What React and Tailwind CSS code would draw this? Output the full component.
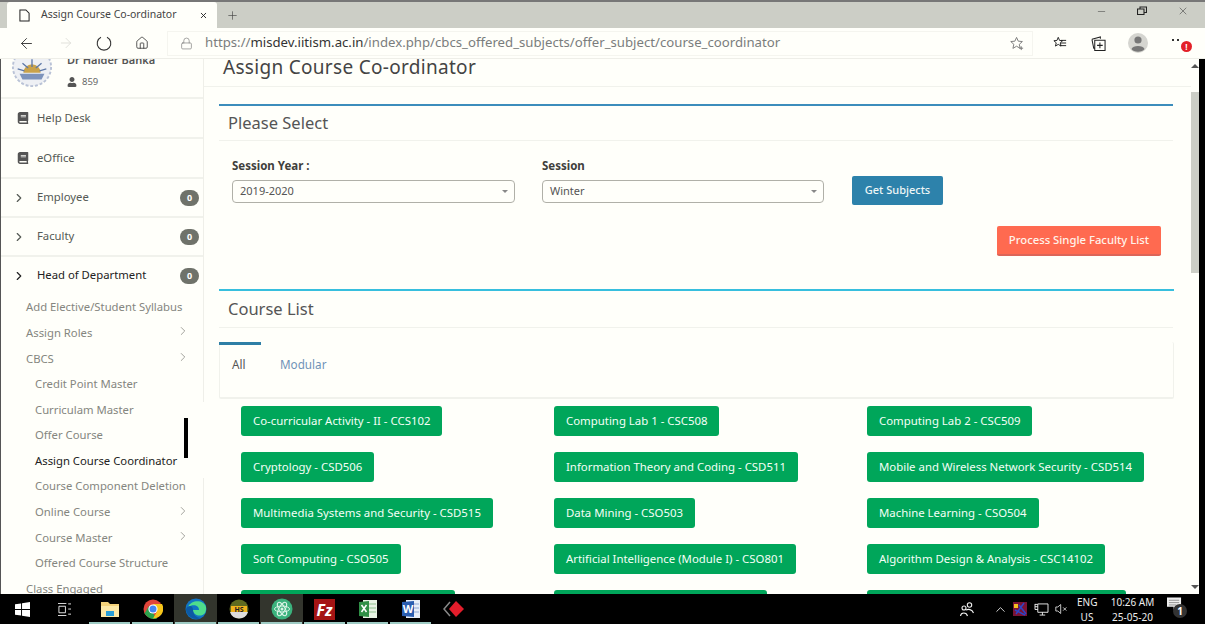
import React from "react";
import { ArrowLeft, ArrowRight, Home, Lock, Plus, X, Minus, ChevronRight, ChevronUp } from "lucide-react";
import { FaBook, FaUser } from "react-icons/fa";

const font = "font-['Noto_Sans','Open_Sans',sans-serif]";

const courses = [
  ["Co-curricular Activity - II - CCS102", "Computing Lab 1 - CSC508", "Computing Lab 2 - CSC509"],
  ["Cryptology - CSD506", "Information Theory and Coding - CSD511", "Mobile and Wireless Network Security - CSD514"],
  ["Multimedia Systems and Security - CSD515", "Data Mining - CSO503", "Machine Learning - CSO504"],
  ["Soft Computing - CSO505", "Artificial Intelligence (Module I) - CSO801", "Algorithm Design & Analysis - CSC14102"],
];

function Course({ children }) {
  return (
    <div className="flex">
      <div className="h-[30px] px-3 flex items-center rounded-[3px] bg-[#00a65a] text-[#f4fff6] text-[11.4px] whitespace-nowrap">
        {children}
      </div>
    </div>
  );
}

function TopRow({ label }) {
  return (
    <div className="h-[40px] shrink-0 flex items-center pl-[16px] border-b-2 border-[#f1f2ec] text-[#555a55] text-[11.3px]">
      <FaBook className="w-[12px] h-[12px] text-[#555] mr-[8px]" />
      {label}
    </div>
  );
}

function GroupRow({ label, active }) {
  return (
    <div className={`shrink-0 flex items-center pl-[11px] pr-[5px] text-[11.3px] ${active ? "h-[38px] pb-[1px] text-[#222]" : "h-[39px] text-[#555a55] border-b-2 border-[#f1f2ec]"}`}>
      <ChevronRight className="w-[14px] h-[14px] mr-[11px]" strokeWidth={2} />
      <span className="flex-1">{label}</span>
      <span className="w-[19px] h-[16px] rounded-full bg-[#6f726a] text-white text-[9px] font-bold flex items-center justify-center">0</span>
    </div>
  );
}

function Sub({ label, arrow, deep, active }) {
  return (
    <div className={`h-[25.6px] shrink-0 flex items-center text-[11.3px] whitespace-nowrap ${deep ? "pl-[34px]" : "pl-[25px]"} pr-[14px] ${active ? "text-[#222]" : "text-[#85867f]"}`}>
      <span className="flex-1">{label}</span>
      {arrow && <ChevronRight className="w-[14px] h-[14px] -mt-[4px]" strokeWidth={1.3} />}
    </div>
  );
}

function Sidebar() {
  return (
    <aside className="relative w-[204px] shrink-0 h-full overflow-hidden border-l border-l-[#555]">
      <div className="h-[40px] shrink-0 relative flex border-b-2 border-[#f1f2ec]">
        <svg viewBox="0 0 44 44" className="w-[42px] h-[42px] absolute left-[10px] -top-[13px]">
          <circle cx="22" cy="22" r="20" fill="#eef0f4" stroke="#b9c2d6" strokeWidth="2" strokeDasharray="3 2" />
          <path d="M13 28a9 9 0 0 1 18 0z" fill="#c9a24a" />
          <path d="M22 14v8M12 18l6 5M32 18l-6 5M7 24l7 2M37 24l-7 2" stroke="#5d78a8" strokeWidth="1.4" />
          <path d="M9 29h26l-3 6H12z" fill="#7d93bb" />
        </svg>
        <div className="pl-[66px]">
          <div className="-mt-[8px] h-[17px] text-[11px] font-semibold text-[#555] leading-[17px]">Dr Haider Banka</div>
          <div className="mt-[7px] flex items-center text-[9.5px] text-[#666]">
            <FaUser className="w-[10px] h-[10px] text-[#555] mr-[5px]" />859
          </div>
        </div>
      </div>
      <TopRow label="Help Desk" />
      <TopRow label="eOffice" />
      <GroupRow label="Employee" />
      <GroupRow label="Faculty" />
      <GroupRow label="Head of Department" active />
      <Sub label="Add Elective/Student Syllabus" />
      <Sub label="Assign Roles" arrow />
      <Sub label="CBCS" arrow />
      <Sub label="Credit Point Master" deep />
      <Sub label="Curriculam Master" deep />
      <Sub label="Offer Course" deep />
      <Sub label="Assign Course Coordinator" deep active />
      <Sub label="Course Component Deletion" deep />
      <Sub label="Online Course" deep arrow />
      <Sub label="Course Master" deep arrow />
      <Sub label="Offered Course Structure" deep />
      <Sub label="Class Engaged" />
      <div className="absolute left-[183px] top-[359px] w-[4px] h-[40px] bg-black" />
      <div className="absolute right-0 top-0 h-[343px] w-px bg-[#efefe9]" />
      <div className="absolute right-0 top-[419px] bottom-0 w-px bg-[#efefe9]" />
    </aside>
  );
}

function Select({ label, value, w, ml }) {
  return (
    <div className={`${w} ${ml}`}>
      <div className="h-[17px] text-[11.5px] font-bold text-[#3f403c] leading-[17px]">{label}</div>
      <div className="mt-[6px] h-[23px] rounded-[4px] border border-[#b0b0a8] flex items-center pl-[7px] pr-[6px] text-[11px] text-[#555]">
        <span className="flex-1">{value}</span>
        <span className="w-0 h-0 border-l-[3px] border-r-[3px] border-t-[3px] border-l-transparent border-r-transparent border-t-[#888]" />
      </div>
    </div>
  );
}

function Main() {
  return (
    <main className="flex-1 min-w-0 h-full overflow-hidden">
      <div className="h-[28px] pl-[19px] border-b border-[#f1f2ec] text-[19px] text-[#444] leading-[17px] tracking-[0.3px] whitespace-nowrap">
        Assign Course Co-ordinator
      </div>
      <section className="mt-[17px] ml-[15px] w-[954px] border-t-2 border-[#3c8dbc]">
        <div className="h-[35px] pl-[9px] flex items-center border-b border-[#f1f2ec] text-[16.5px] text-[#555]">Please Select</div>
        <div className="pl-[13px] pt-[16px] flex items-start">
          <Select label="Session Year :" value="2019-2020" w="w-[283px]" />
          <Select label="Session" value="Winter" w="w-[282px]" ml="ml-[27px]" />
          <button className="ml-[28px] mt-[19px] w-[91px] h-[29px] rounded-[2px] bg-[#2d82ab] text-[#eef6f6] text-[11px] font-medium">Get Subjects</button>
        </div>
        <div className="mt-[21px] flex justify-end pr-[12px]">
          <button className="w-[164px] h-[30px] rounded-[2px] bg-[#ff6a50] border-b-2 border-[#dc6558] text-[#fff3ea] text-[11.3px] font-medium">Process Single Faculty List</button>
        </div>
      </section>
      <section className="mt-[33px] ml-[15px] w-[955px] border-t-2 border-[#37bfde]">
        <div className="h-[37px] pl-[9px] flex items-center border-b border-[#f1f2ec] text-[16.5px] text-[#555] mr-[1px]">Course List</div>
        <div className="mt-[14px] h-[57px] rounded-[2px] border-l border-r border-b-2 border-[#f1f2ec] relative flex text-[11.7px]">
          <div className="w-[42px] h-[40px] border-t-[3px] border-[#2f7fa6] -ml-px pl-[13px] pt-[11px] text-[#555]">All</div>
          <div className="ml-[19px] pt-[14px] text-[#6f93b8]">Modular</div>
        </div>
        <div className="mt-[7px] pl-[22px] grid grid-cols-[313px_313px_1fr] gap-y-[16px]">
          {courses.map((row) => row.map((c) => <Course key={c}>{c}</Course>))}
          <div className="w-[214px] h-[30px] rounded-[3px] bg-[#00a65a]" />
          <div className="w-[213px] h-[30px] rounded-[3px] bg-[#00a65a]" />
          <div className="w-[259px] h-[30px] rounded-[3px] bg-[#00a65a]" />
        </div>
      </section>
    </main>
  );
}

function Scrollbar() {
  return (
    <div className="w-[8px] shrink-0 h-full flex flex-col items-center relative">
      <div className="mt-[5px] w-0 h-0 border-l-[4px] border-r-[4px] border-b-[4px] border-l-transparent border-r-transparent border-b-[#555]" />
      <div className="mt-[24px] w-full h-[181px] bg-[#cccec6]" />
      <div className="mt-auto mb-[5px] w-0 h-0 border-l-[4px] border-r-[4px] border-t-[4px] border-l-transparent border-r-transparent border-t-[#555]" />
    </div>
  );
}

function Browser() {
  return (
    <div>
      <div className="h-[2px] bg-[#777]" />
      <div className="h-[26px] bg-[#cccec6] flex items-stretch pr-[16px]">
        <div className="ml-[7px] w-[210px] bg-[#fffffa] rounded-t-[3px] flex items-center text-[10.5px] text-[#444]">
          <svg viewBox="0 0 12 14" className="w-[11px] h-[13px] ml-[12px] mr-[11px]" fill="none" stroke="#222" strokeWidth="1.1">
            <path d="M1 1h6.5L11 4.5V13H1z" />
          </svg>
          <span className="flex-1 whitespace-nowrap">Assign Course Co-ordinator</span>
          <X className="w-[9px] h-[9px] mr-[9px] text-[#222]" strokeWidth={2.4} />
        </div>
        <div className="ml-[9px] flex items-center"><Plus className="w-[13px] h-[13px] text-[#444]" strokeWidth={1.2} /></div>
        <div className="ml-auto flex items-center gap-[30px] pb-[8px] text-[#444]">
          <Minus className="w-[11px] h-[11px]" strokeWidth={1.2} />
          <svg viewBox="0 0 10 10" className="w-[10px] h-[10px]" fill="none" stroke="#222" strokeWidth="1.1"><path d="M.5 3h6.5v5.500H.5zM3 3V1h6.500v5.500H7" /></svg>
          <X className="w-[12px] h-[12px]" strokeWidth={1.2} />
        </div>
      </div>
      <div className="h-[31px] bg-[#fffffa] flex items-center border-b border-[#eeeee8] relative">
        <ArrowLeft className="ml-[18px] w-[17px] h-[17px] text-[#333]" strokeWidth={1.3} />
        <ArrowRight className="ml-[23px] w-[16px] h-[16px] text-[#dcdcd6]" strokeWidth={1.3} />
        <svg viewBox="0 0 16 16" className="ml-[22px] w-[16px] h-[16px]" fill="none" stroke="#333" strokeWidth="1.1"><path d="M5 2.2A6.8 6.8 0 1 0 11 2.2" /></svg>
        <Home className="ml-[23px] w-[14px] h-[14px] text-[#333]" strokeWidth={1.4} />
        <div className="ml-[18px] w-[866px] h-[25px] border border-[#f5f5ef] flex items-center text-[13.2px] whitespace-nowrap text-[#7a7d7d]">
          <Lock className="ml-[12px] mr-[12px] w-[13px] h-[13px] text-[#777]" strokeWidth={1.2} />
          <span>https://</span><span className="text-[#333]">misdev.iitism.ac.in</span><span>/index.php/cbcs_offered_subjects/offer_subject/course_coordinator</span>
          <svg viewBox="0 0 16 16" className="ml-auto mr-[7px] w-[15px] h-[15px]" fill="none" stroke="#777" strokeWidth="1"><path d="M7 1.500l1.800 4 4.400.4-3.300 3 1 4.300L7 10.900l-3.900 2.300 1-4.300-3.300-3 4.400-.4zM12 11v4M10 13h4" /></svg>
        </div>
        <svg viewBox="0 0 16 16" className="ml-[20px] w-[14px] h-[14px]" fill="none" stroke="#222" strokeWidth="1.1"><path d="M6 1.500l1.500 3.600 3.500.3-2.700 2.400.9 3.700L6 9.600l-3.200 1.900.9-3.700L1 5.400l3.500-.3zM9 5h6M9 8h6M8 11h7" /></svg>
        <svg viewBox="0 0 16 16" className="ml-[24px] w-[15px] h-[15px]" fill="none" stroke="#222" strokeWidth="1.1"><path d="M1 3.500L10 1v2M4 4.500h11v11H4zM1 3.500l2 10M9.500 7v6M6.500 10h6" /></svg>
        <svg viewBox="0 0 20 20" className="ml-[22px] w-[20px] h-[20px]"><circle cx="10" cy="10" r="10" fill="#d5d5d0" /><circle cx="10" cy="7" r="3.600" fill="#777" /><path d="M3.500 16c1-4 12-4 13 0-2 3.500-11 3.500-13 0z" fill="#777" /></svg>
        <div className="ml-[24px] relative w-[16px] h-[16px] text-[#333]">
          <div className="absolute left-0 top-[4px] flex gap-[3px]"><span className="w-[2px] h-[2px] bg-[#333]" /><span className="w-[2px] h-[2px] bg-[#333]" /></div>
          <div className="absolute left-[9px] top-[6px] w-[11px] h-[11px] rounded-full bg-[#e32028] text-white text-[8px] font-bold leading-[11px] text-center">!</div>
        </div>
      </div>
    </div>
  );
}

const Under = ({ children, active }) => (
  <div className={`relative h-full w-[43px] flex items-center justify-center ${active ? "bg-[#33352d]" : ""}`}>
    {children}
    {active !== undefined && <div className="absolute left-[1px] right-[1px] bottom-0 h-[2px] bg-[#9ecbc4]" />}
  </div>
);

function Taskbar() {
  return (
    <footer className="h-[30px] bg-black flex items-stretch text-[#eee] text-[10px]">
      <div className="w-[45px] flex items-center justify-center">
        <svg viewBox="0 0 16 16" className="w-[15px] h-[15px]" fill="#fff"><path d="M0 2.500l6.500-1v6H0zM7.500 1.300L16 0v7.500H7.500zM0 8.500h6.500v6l-6.500-1zM7.500 8.500H16V16l-8.500-1.300z" /></svg>
      </div>
      <div className="w-[38px] flex items-center justify-center">
        <svg viewBox="0 0 16 14" className="w-[15px] h-[13px]" fill="none" stroke="#eee" strokeWidth="1"><path d="M1 .5h9M1 13.500h9M2 3.500h7v7H2zM12 1h3M12 6.500h3M12 12h3" /></svg>
      </div>
      <div className="flex ml-[5px]">
        <Under active={false}>
          <svg viewBox="0 0 20 18" className="w-[20px] h-[18px]"><path d="M1 2h7l2 2h9v13H1z" fill="#f4d27a" /><path d="M1 6h18v11H1z" fill="#fde9a8" /><path d="M6 11h8v5H6z" fill="#2b9fd8" /></svg>
        </Under>
        <Under active={false}>
          <svg viewBox="0 0 20 20" className="w-[20px] h-[20px]"><circle cx="10" cy="10" r="9.500" fill="#e0443a" /><path d="M1.500 14.500L6 7l4 7 4 6c-6 1-10-2-12.500-5.500z" fill="#2ba24c" /><path d="M10 5h9a9.500 9.500 0 0 1-6 14l-3 .5 4-7z" fill="#f6c51b" /><circle cx="10" cy="10" r="4.600" fill="#fff" /><circle cx="10" cy="10" r="3.500" fill="#4285f4" /></svg>
        </Under>
        <Under active={true}>
          <svg viewBox="0 0 22 22" className="w-[22px] h-[22px]"><circle cx="11" cy="11" r="10.500" fill="#1173c4" /><path d="M21 9C19 2 7 1 3 9c5-3 11-2 11 3h-6c0 5 8 8 12 3 .8-1.500 1.200-3.500 1-6z" fill="#4fdc8c" /><path d="M8 12c0 5 4 8 8 8-7 3-15-2-15-9 2-4 7-4 7 1z" fill="#0c59a4" /></svg>
        </Under>
        <Under active={false}>
          <svg viewBox="0 0 20 20" className="w-[20px] h-[20px]"><circle cx="10" cy="10" r="9.500" fill="#5f6b20" /><path d="M1 13a9.500 9.500 0 0 0 18 0z" fill="#ddd" /><path d="M2 7h16v6H2z" fill="#f1b31c" /><text x="10" y="12.500" fontSize="7" fontWeight="700" textAnchor="middle" fill="#222">HS</text></svg>
        </Under>
        <Under active={true}>
          <svg viewBox="0 0 22 22" className="w-[22px] h-[22px]" fill="none"><circle cx="11" cy="11" r="10.500" fill="#3bb27d" /><g stroke="#d9f3e6" strokeWidth="1"><ellipse cx="11" cy="11" rx="7.500" ry="3" /><ellipse cx="11" cy="11" rx="7.500" ry="3" transform="rotate(60 11 11)" /><ellipse cx="11" cy="11" rx="7.500" ry="3" transform="rotate(120 11 11)" /></g><circle cx="11" cy="11" r="1.500" fill="#d9f3e6" /></svg>
        </Under>
        <Under active={false}>
          <svg viewBox="0 0 20 20" className="w-[21px] h-[21px]"><rect width="20" height="20" fill="#a51414" /><text x="10" y="16" fontSize="15" fontWeight="700" fontStyle="italic" textAnchor="middle" fill="#fff">Fz</text></svg>
        </Under>
        <Under active={false}>
          <svg viewBox="0 0 20 20" className="w-[20px] h-[20px]"><path d="M5 1h14v18H5z" fill="#e8f3e4" /><path d="M11 5h7M11 9h7M11 13h7" stroke="#8fbf8f" /><path d="M1 3l10-1v16L1 17z" fill="#2f8f46" /><path d="M3.500 6l5 7M8.500 6l-5 7" stroke="#fff" strokeWidth="1.500" /></svg>
        </Under>
        <Under active={false}>
          <svg viewBox="0 0 20 20" className="w-[20px] h-[20px]"><path d="M5 1h14v18H5z" fill="#e6edf8" /><path d="M12 5h6M12 9h6M12 13h6" stroke="#8ea9d8" /><path d="M1 3l12-1v16L1 17z" fill="#2a5db0" /><text x="7" y="14" fontSize="11" fontWeight="700" textAnchor="middle" fill="#fff">W</text></svg>
        </Under>
        <div className="w-[43px] flex items-center justify-center">
          <svg viewBox="0 0 22 18" className="w-[22px] h-[18px]"><path d="M7 2L1 9l6 7" fill="none" stroke="#888" strokeWidth="1.500" /><path d="M13 1l8 8-8 8-7-8z" fill="#e31d2b" /></svg>
        </div>
      </div>
      <div className="ml-auto flex items-center">
        <svg viewBox="0 0 16 16" className="w-[16px] h-[16px]" fill="none" stroke="#eee" strokeWidth="1.100"><circle cx="5" cy="7" r="2" /><circle cx="10.500" cy="4" r="2.200" /><path d="M1.500 15c.5-4 6-4 7 0M7 9c2-1 6-1 7.500 3" /></svg>
        <ChevronUp className="ml-[18px] w-[15px] h-[15px]" strokeWidth={1.4} />
        <svg viewBox="0 0 14 14" className="ml-[5px] w-[14px] h-[14px]"><rect width="14" height="14" fill="#7a1335" /><path d="M1 2h4v4H1z" fill="#f3c020" /><path d="M6 3l7 9M11 1L3 12M2 8l10 5" stroke="#2d46c8" strokeWidth="1.500" /></svg>
        <svg viewBox="0 0 16 14" className="ml-[7px] w-[15px] h-[13px]" fill="none" stroke="#eee" strokeWidth="1"><path d="M4 1h11v9H4zM9 10v3M6 13h6M1 1.500h3M1 4h3M1 1v6h3" /></svg>
        <svg viewBox="0 0 16 14" className="ml-[6px] w-[13px] h-[12px]" fill="none" stroke="#eee" strokeWidth="1"><path d="M1 4.500h2.500L7 1.500v11L3.500 9.500H1zM10 5l4 4M14 5l-4 4" /></svg>
        <div className="ml-[9px] mt-[1px] w-[20px] text-center leading-[15px] text-[10px]"><div>ENG</div><div>US</div></div>
        <div className="ml-[11px] mt-[1px] w-[49px] text-center leading-[15px] text-[10px] whitespace-nowrap"><div>10:26 AM</div><div>25-05-20</div></div>
        <div className="ml-[10px] w-[22px] h-[24px] relative">
          <svg viewBox="0 0 16 14" className="w-[15px] h-[14px]" fill="#eee"><path d="M0 0h15v10H10l-3 3V10H0z" /><path d="M2 3h11M2 5.500h11M2 8h8" stroke="#777" strokeWidth=".8" /></svg>
          <div className="absolute left-[6px] top-[7px] w-[14px] h-[14px] rounded-full bg-[#333] text-[10px] font-bold text-white text-center leading-[14px]">1</div>
        </div>
        <div className="w-[16px]" />
      </div>
    </footer>
  );
}

export default function App() {
  return (
    <div className={`${font} w-[1205px] h-[624px] overflow-hidden flex flex-col bg-[#fffffa]`}>
      <div className="flex flex-1 min-h-0 flex-col">
        <Browser />
        <div className="flex-1 min-h-0 flex">
          <Sidebar />
          <Main />
          <Scrollbar />
          <div className="w-[6px] shrink-0 bg-black" />
        </div>
      </div>
      <Taskbar />
    </div>
  );
}
